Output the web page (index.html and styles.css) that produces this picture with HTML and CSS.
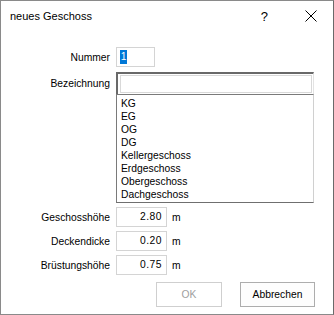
FILE: index.html
```html
<!DOCTYPE html>
<html>
<head>
<meta charset="utf-8">
<link rel="stylesheet" href="styles.css">
</head>
<body>
<div class="win">
  <div class="titlebar">
    <span class="title">neues Geschoss</span>
    <span class="help">?</span>
    <span class="close"><svg width="12" height="12" viewBox="0 0 12 12"><path d="M0.5 0.5 L11.5 11.5 M11.5 0.5 L0.5 11.5" stroke="#000" stroke-width="1" fill="none"/></svg></span>
  </div>
  <div class="content">
    <div class="row r-num">
      <span class="lbl">Nummer</span>
      <div class="box num"><span class="sel">1</span></div>
    </div>
    <div class="row r-bez">
      <span class="lbl">Bezeichnung</span>
      <div class="combo"><div class="edit"></div></div>
    </div>
    <div class="row r-list">
      <span class="lbl"></span>
      <ul class="list">
        <li>KG</li>
        <li>EG</li>
        <li>OG</li>
        <li>DG</li>
        <li>Kellergeschoss</li>
        <li>Erdgeschoss</li>
        <li>Obergeschoss</li>
        <li>Dachgeschoss</li>
      </ul>
    </div>
    <div class="row r-val">
      <span class="lbl">Geschosshöhe</span>
      <div class="box val">2.80</div>
      <span class="unit">m</span>
    </div>
    <div class="row r-val">
      <span class="lbl">Deckendicke</span>
      <div class="box val">0.20</div>
      <span class="unit">m</span>
    </div>
    <div class="row r-val">
      <span class="lbl">Brüstungshöhe</span>
      <div class="box val">0.75</div>
      <span class="unit">m</span>
    </div>
    <div class="buttons">
      <button class="btn ok" disabled>OK</button>
      <button class="btn cancel">Abbrechen</button>
    </div>
  </div>
</div>
</body>
</html>
```
FILE: styles.css
```css
html, body {
  margin: 0;
  padding: 0;
  background: #fff;
}
body {
  font-family: "Liberation Sans", Arial, sans-serif;
  font-size: 10.3px;
  color: #000;
}
.win {
  width: 334px;
  height: 315px;
  box-sizing: border-box;
  border: 1px solid #8a8a8a;
  border-right-color: #6a6a6a;
  background: #fff;
  display: flex;
  flex-direction: column;
}
.titlebar {
  height: 30px;
  display: flex;
  align-items: center;
  flex: none;
}
.title {
  font-size: 11px;
  margin-left: 9px;
  flex: 1;
}
.help {
  font-family: "Liberation Sans", Arial, sans-serif;
  font-size: 13px;
  margin-right: 37px;
}
.close {
  display: flex;
  margin-right: 16px;
}
.content {
  display: flex;
  flex-direction: column;
  padding-top: 16px;
}
.row {
  display: flex;
  align-items: center;
}
.lbl {
  width: 109px;
  margin-right: 6px;
  text-align: right;
  flex: none;
}
.box {
  box-sizing: border-box;
  height: 20px;
  border: 1px solid #d4d4d4;
  background: #fff;
}
.num {
  width: 39px;
  padding: 2px 0 0 3px;
}
.sel {
  display: inline-block;
  background: #0078d7;
  color: #fff;
  width: 7px;
  height: 14px;
  line-height: 14px;
  text-align: center;
}
.r-bez {
  margin-top: 5px;
}
.combo {
  box-sizing: border-box;
  width: 198px;
  height: 22px;
  border-top: 2px solid #696969;
  border-left: 2px solid #696969;
  border-right: 1px solid #e3e3e3;
  padding: 1px 1px 0 2px;
}
.edit {
  box-sizing: border-box;
  height: 18px;
  border: 1px solid #d9d9d9;
}
.r-list {
  align-items: flex-start;
}
.list {
  box-sizing: border-box;
  width: 198px;
  height: 109px;
  margin: 0;
  padding: 2px 0 0 4px;
  list-style: none;
  border: 1px solid #7a7a7a;
  border-right-color: #d0d0d0;
  border-bottom-color: #6f6f6f;
}
.list li {
  height: 13px;
  line-height: 13px;
}
.r-val {
  margin-top: 4px;
}
.val {
  width: 51px;
  text-align: right;
  padding: 0 4px;
  line-height: 18px;
  letter-spacing: 0.5px;
}
.unit {
  margin-left: 5px;
}
.buttons {
  display: flex;
  justify-content: flex-end;
  gap: 18px;
  margin-top: 7px;
  padding-right: 18px;
}
.btn {
  box-sizing: border-box;
  height: 25px;
  font-family: "Liberation Sans", Arial, sans-serif;
  font-size: 10.3px;
  background: #fdfdfd;
  border: 1px solid #adadad;
  color: #000;
  padding: 0;
}
.btn.ok {
  width: 66px;
  color: #a0a0a0;
  border-color: #cfcfcf;
  background: #fff;
}
.btn.cancel {
  width: 75px;
}
```
